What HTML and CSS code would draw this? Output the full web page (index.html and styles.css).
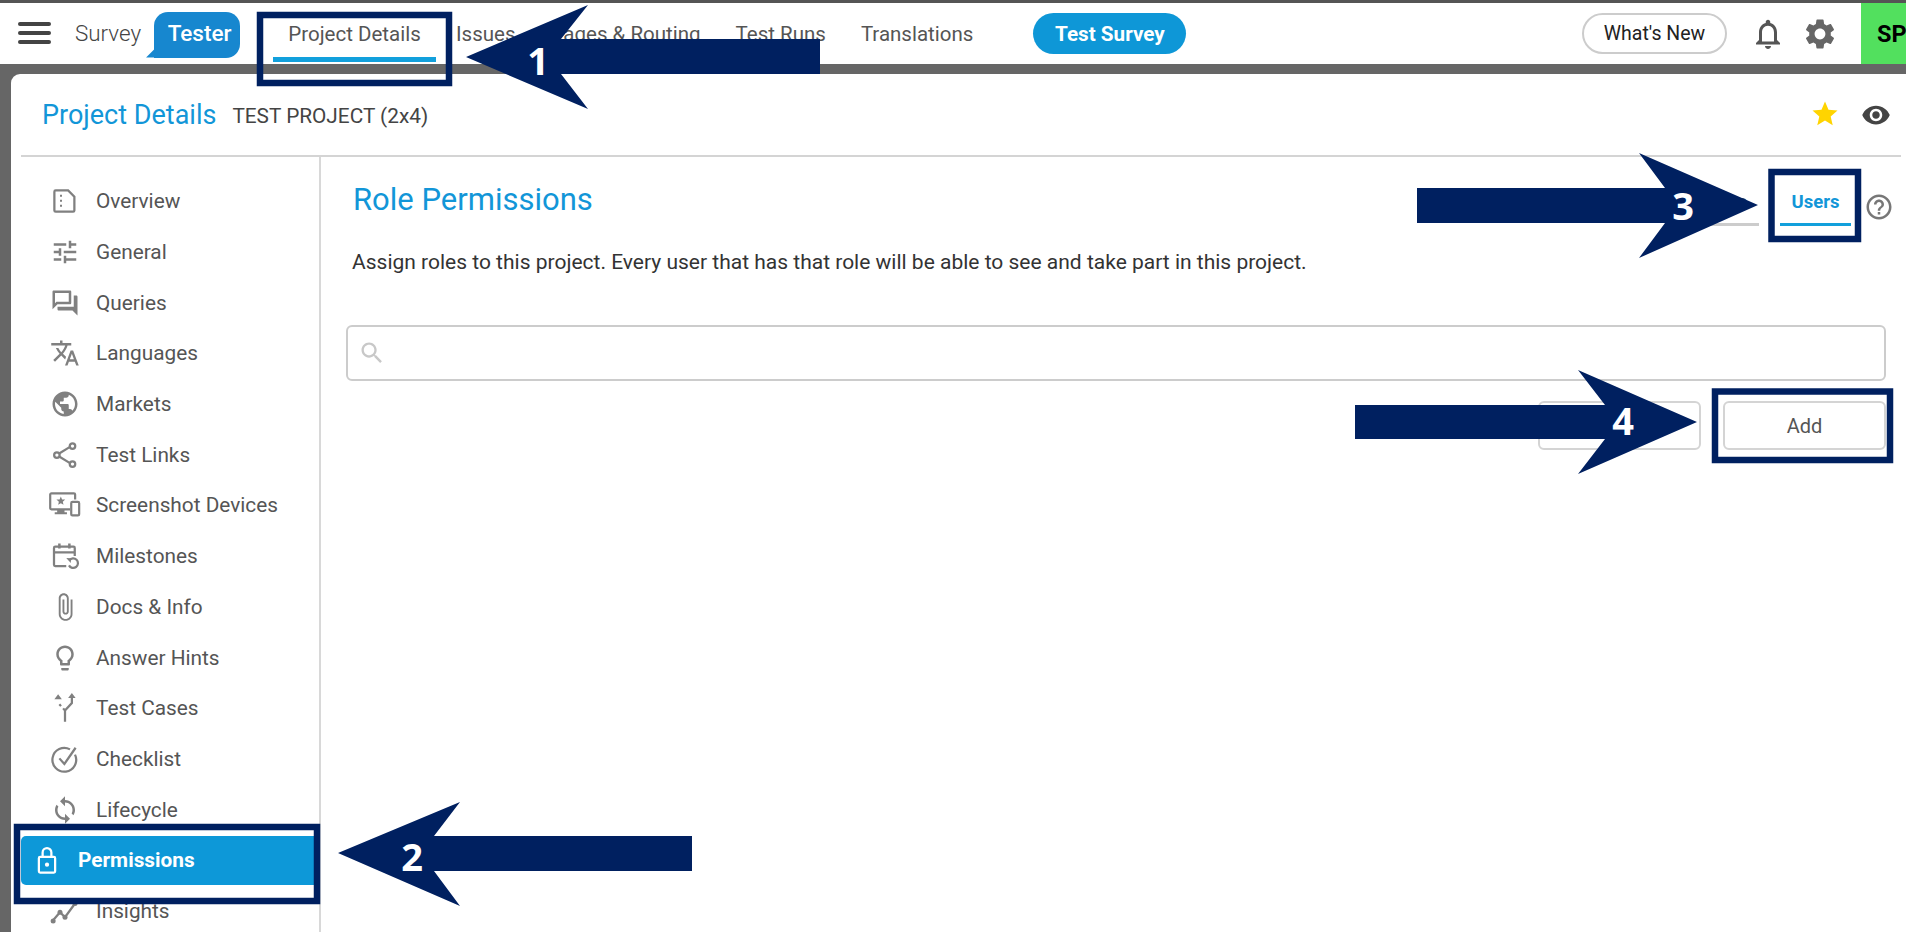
FILE: index.html
```html
<!DOCTYPE html>
<html lang="en">
<head>
<meta charset="utf-8">
<title>Role Permissions</title>
<link rel="stylesheet" href="styles.css">
</head>
<body>
<div class="app">
  <header class="topbar">
    <button class="burger" aria-label="Menu"><span></span><span></span><span></span></button>
    <span class="brand">Survey</span>
    <span class="bubble">Tester</span>
    <nav class="nav">
      <a class="nav-item active">Project Details</a>
      <a class="nav-item">Issues</a>
      <a class="nav-item">Pages &amp; Routing</a>
      <a class="nav-item">Test Runs</a>
      <a class="nav-item">Translations</a>
    </nav>
    <span class="pill-test">Test Survey</span>
    <span class="pill-new">What's New</span>
    <svg class="ic-bell" viewBox="0 0 24 24"><path d="M12 22c1.1 0 2-.9 2-2h-4c0 1.1.9 2 2 2zm6-6v-5c0-3.07-1.63-5.64-4.5-6.32V4c0-.83-.67-1.5-1.5-1.5s-1.5.67-1.5 1.5v.68C7.64 5.36 6 7.92 6 11v5l-2 2v1h16v-1l-2-2zm-2 1H8v-6c0-2.48 1.51-4.5 4-4.5s4 2.02 4 4.5v6z"/></svg>
    <svg class="ic-gear" viewBox="0 0 24 24"><path d="M19.14 12.94c.04-.3.06-.61.06-.94 0-.32-.02-.64-.07-.94l2.03-1.58c.18-.14.23-.41.12-.61l-1.92-3.32c-.12-.22-.37-.29-.59-.22l-2.39.96c-.5-.38-1.03-.7-1.62-.94l-.36-2.54c-.04-.24-.24-.41-.48-.41h-3.84c-.24 0-.43.17-.47.41l-.36 2.54c-.59.24-1.13.57-1.62.94l-2.39-.96c-.22-.08-.47 0-.59.22L2.74 8.87c-.12.21-.08.47.12.61l2.03 1.58c-.05.3-.09.63-.09.94s.02.64.07.94l-2.03 1.58c-.18.14-.23.41-.12.61l1.92 3.32c.12.22.37.29.59.22l2.39-.96c.5.38 1.03.7 1.62.94l.36 2.54c.05.24.24.41.48.41h3.84c.24 0 .44-.17.47-.41l.36-2.54c.59-.24 1.13-.56 1.62-.94l2.39.96c.22.08.47 0 .59-.22l1.92-3.32c.12-.22.07-.47-.12-.61l-2.01-1.58zM12 15.6c-1.98 0-3.6-1.62-3.6-3.6s1.62-3.6 3.6-3.6 3.6 1.62 3.6 3.6-1.62 3.6-3.6 3.6z"/></svg>
    <span class="avatar">SP</span>
  </header>

  <section class="card">
    <div class="card-head">
      <h1 class="card-title">Project Details</h1>
      <span class="card-sub">TEST PROJECT (2x4)</span>
      <svg class="ic-star" viewBox="0 0 24 24"><path d="M12 17.27L18.18 21l-1.64-7.03L22 9.24l-7.19-.61L12 2 9.19 8.63 2 9.24l5.46 4.73L5.82 21z"/></svg>
      <svg class="ic-eye" viewBox="0 0 24 24"><path d="M12 4.5C7 4.5 2.73 7.61 1 12c1.73 4.39 6 7.5 11 7.5s9.27-3.11 11-7.5c-1.73-4.39-6-7.5-11-7.5zM12 17c-2.76 0-5-2.24-5-5s2.24-5 5-5 5 2.24 5 5-2.24 5-5 5zm0-8c-1.66 0-3 1.34-3 3s1.34 3 3 3 3-1.34 3-3-1.34-3-3-3z"/></svg>
    </div>
    <div class="card-body">
      <aside class="side">
        <a class="side-item"><svg class="si" viewBox="0 0 24 24"><path class="ln" d="M4.5 3.5h10l5 5v11a1 1 0 0 1-1 1h-14a1 1 0 0 1-1-1v-15a1 1 0 0 1 1-1z"/><path d="M8 7h1.6v1.6H8zM8 11h1.6v1.6H8zM8 15h1.6v1.6H8z"/></svg>Overview</a>
        <a class="side-item"><svg class="si" viewBox="0 0 24 24"><path d="M3 17v2h6v-2H3zM3 5v2h10V5H3zm10 16v-2h8v-2h-8v-2h-2v6h2zM7 9v2H3v2h4v2h2V9H7zm14 4v-2H11v2h10zm-6-4h2V7h4V5h-4V3h-2v6z"/></svg>General</a>
        <a class="side-item"><svg class="si" viewBox="0 0 24 24"><path d="M15 4v7H5.17L4 12.17V4h11m1-2H3c-.55 0-1 .45-1 1v14l4-4h10c.55 0 1-.45 1-1V3c0-.55-.45-1-1-1zm5 4h-2v9H6v2c0 .55.45 1 1 1h11l4 4V7c0-.55-.45-1-1-1z"/></svg>Queries</a>
        <a class="side-item"><svg class="si" viewBox="0 0 24 24"><path d="M12.87 15.07l-2.54-2.51.03-.03c1.74-1.94 2.98-4.17 3.71-6.53H17V4h-7V2H8v2H1v1.99h11.17C11.5 7.92 10.44 9.75 9 11.35 8.07 10.32 7.3 9.19 6.69 8h-2c.73 1.63 1.73 3.17 2.98 4.56l-5.09 5.02L4 19l5-5 3.11 3.11.76-2.04zM18.5 10h-2L12 22h2l1.12-3h4.75L21 22h2l-4.5-12zm-2.62 7l1.62-4.33L19.12 17h-3.24z"/></svg>Languages</a>
        <a class="side-item"><svg class="si" viewBox="0 0 24 24"><path d="M12 2C6.48 2 2 6.48 2 12s4.48 10 10 10 10-4.48 10-10S17.52 2 12 2zm-1 17.93c-3.95-.49-7-3.85-7-7.93 0-.62.08-1.21.21-1.79L9 15v1c0 1.1.9 2 2 2v1.93zm6.9-2.54c-.26-.81-1-1.39-1.9-1.39h-1v-3c0-.55-.45-1-1-1H8v-2h2c.55 0 1-.45 1-1V7h2c1.1 0 2-.9 2-2v-.41c2.93 1.19 5 4.06 5 7.41 0 2.08-.8 3.97-2.1 5.39z"/></svg>Markets</a>
        <a class="side-item"><svg class="si" viewBox="0 0 24 24"><path class="ln" d="M7 11l9-5.5M7 13l9 5.5"/><circle class="ln" cx="5.5" cy="12" r="2.2"/><circle class="ln" cx="18" cy="4.8" r="2.2"/><circle class="ln" cx="18" cy="19.2" r="2.2"/></svg>Test Links</a>
        <a class="side-item"><svg class="si si-wide" viewBox="0 0 27 24"><path class="ln" d="M18 15.500H2.800a1 1 0 0 1-1-1V3.500a1 1 0 0 1 1-1h18.400a1 1 0 0 1 1 1v4"/><path d="M7.500 16h6v2h2v1.600h-10V18h2zM10.500 5l1 2.400 2.600.2-2 1.700.6 2.500-2.200-1.300-2.200 1.300.6-2.500-2-1.700 2.600-.2z"/><rect class="ln" x="19" y="9.500" width="6.500" height="11" rx="1"/></svg>Screenshot Devices</a>
        <a class="side-item"><svg class="si" viewBox="0 0 24 24"><path class="ln" d="M13 20H4.200a1 1 0 0 1-1-1V5.500a1 1 0 0 1 1-1h14.600a1 1 0 0 1 1 1V12M3.200 9h16.600"/><path d="M6.500 2h2v4h-2zM14.500 2h2v4h-2z"/><path class="ln" d="M15.500 15.500a3.800 3.800 0 1 1-.3 4"/><path d="M13 13.500l3.800.2-.2 3.800z"/></svg>Milestones</a>
        <a class="side-item"><svg class="si" viewBox="0 0 24 24"><path d="M16.500 6v11.500c0 2.210-1.790 4-4 4s-4-1.790-4-4V5c0-1.380 1.120-2.500 2.500-2.500s2.500 1.120 2.500 2.500v10.500c0 .55-.45 1-1 1s-1-.45-1-1V6H10v9.500c0 1.380 1.120 2.500 2.500 2.500s2.500-1.120 2.500-2.500V5c0-2.210-1.790-4-4-4S7 2.790 7 5v12.500c0 3.040 2.460 5.500 5.500 5.500s5.500-2.460 5.500-5.500V6h-1.500z"/></svg>Docs &amp; Info</a>
        <a class="side-item"><svg class="si" viewBox="0 0 24 24"><path d="M9 21c0 .55.45 1 1 1h4c.55 0 1-.45 1-1v-1H9v1zm3-19C8.140 2 5 5.140 5 9c0 2.380 1.190 4.470 3 5.740V17c0 .55.45 1 1 1h6c.55 0 1-.45 1-1v-2.260c1.810-1.270 3-3.360 3-5.740 0-3.860-3.140-7-7-7zm2.850 11.100l-.85.6V16h-4v-2.300l-.85-.6C7.800 12.160 7 10.630 7 9c0-2.760 2.240-5 5-5s5 2.240 5 5c0 1.630-.8 3.160-2.150 4.100z"/></svg>Answer Hints</a>
        <a class="side-item"><svg class="si" viewBox="0 0 24 24"><path class="ln" d="M12 23v-9l5.500-6V3M12 14l-1.500-1.700M8.800 10.500L7.500 9"/><path d="M17.500 0l3 4h-6zM6.500 1l3 4h-6z"/></svg>Test Cases</a>
        <a class="side-item"><svg class="si" viewBox="0 0 24 24"><path class="ln" d="M20 8.500a9.500 9.500 0 1 1-4-4.200"/><path class="ln" d="M7.500 11.500l4 4.500 9-13"/></svg>Checklist</a>
        <a class="side-item"><svg class="si" viewBox="0 0 24 24"><path d="M12 4V1L8 5l4 4V6c3.310 0 6 2.690 6 6 0 1.010-.25 1.970-.7 2.800l1.460 1.460C19.540 15.030 20 13.570 20 12c0-4.420-3.580-8-8-8zm0 14c-3.310 0-6-2.690-6-6 0-1.010.25-1.970.7-2.800L5.240 7.740C4.460 8.970 4 10.430 4 12c0 4.420 3.580 8 8 8v3l4-4-4-4v3z"/></svg>Lifecycle</a>
        <a class="side-item current"><svg class="si" viewBox="0 0 24 24"><path class="ln" d="M6.500 9.500h11a1 1 0 0 1 1 1V21a1 1 0 0 1-1 1h-11a1 1 0 0 1-1-1V10.500a1 1 0 0 1 1-1zM8.500 9.500V6a3.500 3.500 0 0 1 7 0v3.500"/><circle cx="12" cy="15.700" r="1.700"/></svg>Permissions</a>
        <a class="side-item"><svg class="si" viewBox="0 0 24 24"><path class="ln" d="M2 20l6-7 4 4 8-11"/><circle cx="2.500" cy="20" r="2"/><circle cx="8" cy="13" r="2"/><circle cx="12" cy="17" r="2"/><circle cx="20" cy="6" r="2"/></svg>Insights</a>
      </aside>
      <main class="main">
        <div class="main-head">
          <h2 class="main-title">Role Permissions</h2>
          <div class="tabs">
            <span class="tab tab-off">Roles</span>
            <span class="tab tab-on">Users</span>
          </div>
          <svg class="ic-help" viewBox="0 0 24 24"><path d="M11 18h2v-2h-2v2zm1-16C6.480 2 2 6.480 2 12s4.480 10 10 10 10-4.480 10-10S17.520 2 12 2zm0 18c-4.410 0-8-3.590-8-8s3.590-8 8-8 8 3.590 8 8-3.590 8-8 8zm0-14c-2.210 0-4 1.790-4 4h2c0-1.100.9-2 2-2s2 .9 2 2c0 2-3 1.750-3 5h2c0-2.250 3-2.500 3-5 0-2.210-1.790-4-4-4z"/></svg>
        </div>
        <p class="intro">Assign roles to this project. Every user that has that role will be able to see and take part in this project.</p>
        <div class="search">
          <svg class="ic-search" viewBox="0 0 24 24"><path d="M15.500 14h-.79l-.28-.27C15.410 12.590 16 11.110 16 9.500 16 5.910 13.090 3 9.500 3S3 5.910 3 9.500 5.910 16 9.500 16c1.610 0 3.090-.59 4.230-1.570l.27.28v.79l5 4.990L20.490 19l-4.990-5zm-6 0C7.010 14 5 11.990 5 9.500S7.010 5 9.500 5 14 7.010 14 9.500 11.990 14 9.500 14z"/></svg>
        </div>
        <div class="actions">
          <button class="btn" aria-label="Secondary action"></button>
          <button class="btn">Add</button>
        </div>
      </main>
    </div>
  </section>
</div>

<svg class="notes" viewBox="0 0 1906 932" width="1906" height="932">
  <rect class="frame" x="260" y="15" width="189" height="68"/>
  <rect class="frame" x="17" y="827" width="300" height="74"/>
  <rect class="frame" x="1771.500" y="172" width="86.500" height="67"/>
  <rect class="frame" x="1715" y="391.500" width="175" height="68.500"/>
  <polygon class="arrow" points="466,57 588,5 561,39 820,39 820,74 561,74 588,109"/>
  <polygon class="arrow" points="338,853 460,802 434,836 692,836 692,871 434,871 460,906"/>
  <polygon class="arrow" points="1758,205 1639,153 1665,188 1417,188 1417,223 1665,223 1639,258"/>
  <polygon class="arrow" points="1697,422 1578,370 1605,405 1355,405 1355,439 1605,439 1578,474"/>
  <text class="num" x="538" y="75">1</text>
  <text class="num" x="412" y="871">2</text>
  <text class="num" x="1683" y="220">3</text>
  <text class="num" x="1623" y="435">4</text>
</svg>
</body>
</html>
```
FILE: styles.css
```css
* { box-sizing: border-box; }
html, body { margin: 0; height: 932px; overflow: hidden; }
body { background: #666; font-family: Roboto, "Liberation Sans", sans-serif; color: #555; position: relative; }
h1, h2, p { margin: 0; font-weight: 400; }

.app { display: flex; flex-direction: column; height: 932px; }

.topbar { height: 64px; flex: none; display: flex; align-items: center; background: #fff; border-top: 3px solid #555; padding-left: 18px; position: relative; }
.burger { display: flex; flex-direction: column; justify-content: space-between; width: 33px; height: 22px; margin: -1px 0 0; padding: 0; border: 0; background: none; }
.burger span { display: block; height: 4px; background: #444; border-radius: 2px; }
.brand { margin-left: 24px; padding-bottom: 2px; font-size: 22.400px; font-weight: 300; color: #444; }
.bubble { margin-left: 13px; width: 86px; height: 46px; margin-top: 2px; display: flex; align-items: center; justify-content: center; padding: 0 0 4px 5px; background: #1787cf; color: #fff; font-size: 22.500px; font-weight: 500; border-radius: 14px; border-bottom-left-radius: 0; position: relative; }
.bubble::before { content: ""; position: absolute; left: -8px; bottom: 0; width: 14px; height: 14px; background: #1787cf; clip-path: polygon(100% 0, 100% 100%, 0 100%); }

.nav { display: flex; align-items: center; margin-left: 33px; height: 61px; }
.nav-item { font-size: 20.500px; font-weight: 400; color: #555; height: 61px; display: flex; align-items: center; padding: 0 17.500px; position: relative; white-space: nowrap; }
.nav-item.active { width: 163px; justify-content: center; padding: 0; margin-right: 2.500px; }
.nav-item.active::after { content: ""; position: absolute; left: 0; right: 0; top: 54px; height: 5px; background: #12a0dc; }
.pill-test { margin-left: 42.500px; width: 153px; height: 41px; border-radius: 21px; background: #0e97d7; color: #fff; font-size: 20.700px; font-weight: 700; display: flex; align-items: center; justify-content: center; }
.pill-new { margin-left: auto; width: 145px; height: 41px; border: 2px solid #ccc; border-radius: 21px; background: #fff; color: #222; font-size: 19.500px; display: flex; align-items: center; justify-content: center; }
.ic-bell { width: 36px; height: 36px; margin-left: 23px; fill: #555; }
.ic-gear { width: 36px; height: 36px; margin-left: 16px; margin-right: 23px; fill: #666; }
.avatar { width: 45px; height: 61px; flex: none; background: #52e05e; color: #000; font-size: 23.500px; font-weight: 700; display: flex; align-items: center; padding-left: 16px; overflow: hidden; white-space: nowrap; }

.card { flex: 1; margin: 10px 0 0 11px; background: #fff; border-radius: 9px 0 0 0; padding: 0 5px 0 10px; min-height: 0; display: flex; flex-direction: column; }
.card-head { height: 83px; flex: none; display: flex; align-items: center; padding: 0 0 0 22px; border-bottom: 2px solid #d4d4d4; }
.card-title { font-size: 27px; color: #1296d8; margin-left: -1px; }
.card-sub { margin-left: 16px; font-size: 20.800px; color: #444; padding-top: 3px; }
.ic-star { width: 30px; height: 30px; margin: -2px 0 0 auto; fill: #ffd400; }
.ic-eye { width: 30px; height: 30px; margin-left: 21px; margin-right: 10px; fill: #444; }

.card-body { flex: 1; display: flex; min-height: 0; }
.side { width: 300px; flex: none; border-right: 2px solid #d8d8d8; padding-top: 19px; overflow: hidden; }
.side-item { height: 50.700px; display: flex; align-items: center; gap: 16px; padding-left: 29px; font-size: 20.800px; color: #555; white-space: nowrap; }
.si { width: 30px; height: 30px; flex: none; fill: #808080; }
.si-wide { width: 33px; margin: 0 -1px 0 -2px; }
.si .ln { fill: none; stroke: #808080; stroke-width: 1.800; }
.side-item.current { height: 49px; margin: 1px 0 .7px; background: #0d98d8; color: #fff; font-weight: 700; border-radius: 5px 0 0 5px; gap: 16px; padding-left: 11px; }
.current .si { fill: #fff; }
.current .si .ln { stroke: #fff; }

.main { flex: 1; padding: 0 0 0 25px; min-width: 0; }
.main-head { display: flex; align-items: flex-start; height: 71px; padding-left: 7px; }
.main-title { font-size: 31px; color: #1296d8; margin-top: 26px; line-height: 34px; }
.tabs { margin-left: auto; display: flex; margin-top: 15px; }
.tab { width: 92px; height: 54px; padding-top: 19px; text-align: center; font-size: 18.500px; font-weight: 700; color: #555; border-bottom: 3px solid #ccc; }
.tab-off { text-align: right; padding-right: 12px; }
.tab-on { width: 71px; margin-left: 21px; color: #1296d8; border-bottom-color: #12a0dc; }
.ic-help { width: 30px; height: 30px; margin: 35px 7px 0 13px; fill: #777; }
.intro { font-size: 21px; line-height: 26px; color: #333; margin: 21px 0 0 6px; height: 26px; }
.search { margin: 50px 0 0 0; width: 1540px; height: 56px; border: 2px solid #ccc; border-radius: 6px; display: flex; align-items: center; padding-left: 10px; background: #fff; }
.ic-search { width: 28px; height: 28px; fill: #c8c8c8; }
.actions { display: flex; justify-content: flex-end; gap: 22px; width: 1540px; margin-top: 20px; }
.btn { width: 163px; height: 49px; background: #fff; border: 2px solid #d4d4d4; border-radius: 6px; font: 400 20px Roboto, sans-serif; color: #555; }

.notes { position: absolute; left: 0; top: 0; pointer-events: none; }
.frame { fill: none; stroke: #002060; stroke-width: 6.500; }
.arrow { fill: #002060; }
.num { fill: #fff; font-family: "Open Sans", sans-serif; font-weight: 700; font-size: 38px; text-anchor: middle; }
```
